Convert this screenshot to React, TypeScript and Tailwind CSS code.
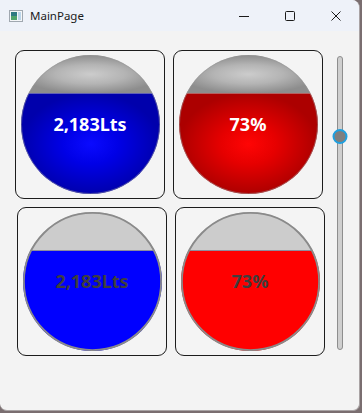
import React from "react";

type GaugeProps = {
  id: string;
  text: string;
  color: "blue" | "red";
  flat?: boolean;
};

function Gauge({ id, text, color, flat }: GaugeProps) {
  const fill = color === "blue" ? "#0000ff" : "#ff0000";
  return (
    <div className="relative w-[139px] h-[139px]">
      <svg width="139" height="139" viewBox="0 0 139 139" className="block">
        <defs>
          <clipPath id={`clip-${id}`}>
            <circle cx="69.5" cy="69.5" r="69.5" />
          </clipPath>
          <radialGradient id={`gray-${id}`} cx="50%" cy="50%" r="50%">
            <stop offset="0" stopColor="#cccccc" />
            <stop offset="0.5" stopColor="#b4b4b4" />
            <stop offset="1" stopColor="#8d8d8d" />
          </radialGradient>
          <radialGradient id={`fill-${id}`} cx="50%" cy="50%" r="50%">
            {color === "blue" ? (
              <>
                <stop offset="0" stopColor="#0a0aff" />
                <stop offset="0.4" stopColor="#0000e6" />
                <stop offset="1" stopColor="#0000ac" />
              </>
            ) : (
              <>
                <stop offset="0" stopColor="#ff0505" />
                <stop offset="0.4" stopColor="#e60000" />
                <stop offset="1" stopColor="#ac0000" />
              </>
            )}
          </radialGradient>
        </defs>
        <g clipPath={`url(#clip-${id})`}>
          <rect x="0" y="0" width="139" height="38.5" fill={flat ? "#cccccc" : `url(#gray-${id})`} />
          <rect x="0" y="38.5" width="139" height="101" fill={flat ? fill : `url(#fill-${id})`} />
          {flat && <line x1="0" y1="38.5" x2="139" y2="38.5" stroke="#8c8c9c" strokeWidth="1" />}
        </g>
        {flat ? (
          <circle cx="69.5" cy="69.5" r="68.6" fill="none" stroke="#8a8a8a" strokeWidth="1.8" />
        ) : (
          <circle cx="69.5" cy="69.5" r="69" fill="none" stroke="#9a9a9a" strokeOpacity="0.5" strokeWidth="1" />
        )}
      </svg>
      <div
        className={`absolute inset-0 flex items-center justify-center text-[18px] font-bold ${
          flat ? "text-[#3e3e3e]" : "text-white"
        }`}
        style={{ fontFamily: '"Noto Sans", "Open Sans", sans-serif' }}
      >
        {text}
      </div>
    </div>
  );
}

function Card({ children }: { children: React.ReactNode }) {
  return (
    <div className="w-[150px] h-[149px] rounded-[9px] border border-[#1c1c1c] bg-[#f4f4f4] flex items-center justify-center">
      {children}
    </div>
  );
}

function TitleBar() {
  return (
    <div className="h-[31px] bg-[#eef2f9] flex items-center shrink-0">
      <svg width="14" height="12" viewBox="0 0 14 12" className="ml-[9px]">
        <rect x="0.5" y="0.5" width="13" height="11" fill="#f4f6f8" stroke="#a0a8b0" />
        <rect x="2" y="2" width="6" height="8" fill="#2e7a82" />
        <rect x="2" y="6" width="6" height="4" fill="#4fa36c" />
        <rect x="9" y="2" width="3" height="8" fill="#bcd6ea" />
      </svg>
      <span
        className="ml-[7px] text-[11.5px] text-[#1b1b1b]"
        style={{ fontFamily: '"Noto Sans", "Open Sans", sans-serif' }}
      >
        MainPage
      </span>
      <div className="ml-auto flex h-full">
        <div className="w-[46px] h-full flex items-center justify-center">
          <svg width="10" height="10" viewBox="0 0 10 10">
            <line x1="0" y1="5.5" x2="10" y2="5.5" stroke="#1b1b1b" strokeWidth="1" />
          </svg>
        </div>
        <div className="w-[46px] h-full flex items-center justify-center">
          <svg width="10" height="10" viewBox="0 0 10 10">
            <rect x="0.5" y="0.5" width="9" height="9" rx="1" fill="none" stroke="#1b1b1b" strokeWidth="1" />
          </svg>
        </div>
        <div className="w-[46px] h-full flex items-center justify-center">
          <svg width="10" height="10" viewBox="0 0 10 10">
            <path d="M0.5 0.5 L9.5 9.5 M9.5 0.5 L0.5 9.5" stroke="#1b1b1b" strokeWidth="1" />
          </svg>
        </div>
      </div>
    </div>
  );
}

export default function App() {
  return (
    <div className="w-[362px] h-[413px] bg-[#7a6e70]">
      <div className="w-[360px] h-[411px] bg-[#f3f3f3] rounded-tr-[8px] rounded-b-[7px] overflow-hidden flex flex-col border-r border-b border-[#a9a3a4]">
        <TitleBar />
        <div className="flex flex-1">
          <div className="flex flex-col pt-[19px] gap-[8px]">
            <div className="flex gap-[8px] ml-[15px]">
              <Card>
                <Gauge id="a" text="2,183Lts" color="blue" />
              </Card>
              <Card>
                <Gauge id="b" text="73%" color="red" />
              </Card>
            </div>
            <div className="flex gap-[8px] ml-[17px]">
              <Card>
                <Gauge id="c" text="2,183Lts" color="blue" flat />
              </Card>
              <Card>
                <Gauge id="d" text="73%" color="red" flat />
              </Card>
            </div>
          </div>
          <div className="ml-[12px] pt-[25px]">
            <div className="relative w-[6px] h-[294px] rounded-full bg-[#cfcfcf] border border-[#8e8e8e]">
              <div className="absolute left-1/2 top-[72px] -translate-x-1/2 w-[15px] h-[15px] rounded-full bg-[#7f7f7f] border-2 border-[#1ea0e0]" />
            </div>
          </div>
        </div>
      </div>
    </div>
  );
}
